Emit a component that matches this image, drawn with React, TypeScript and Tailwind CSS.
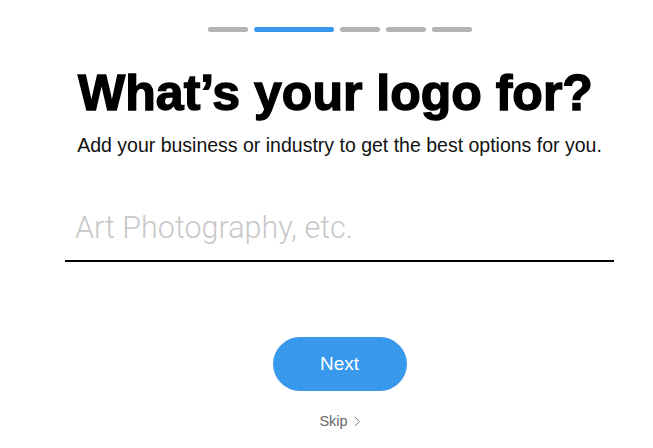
import { useState } from 'react';

const steps = [false, true, false, false, false];

export default function App() {
  const [value, setValue] = useState('');

  return (
    <div className="min-h-screen bg-white font-['Liberation_Sans',Arial,sans-serif]">
      <div className="ml-[65px] flex w-[549px] flex-col items-center pt-[27px]">
        <div className="flex gap-[6px]">
          {steps.map((active, i) => (
            <div
              key={i}
              className={
                active
                  ? 'h-[5px] w-[80px] rounded-full bg-[#3899ec]'
                  : 'h-[5px] w-[40px] rounded-full bg-[#b3b3b3]'
              }
            />
          ))}
        </div>

        <h1 className="mt-[31px] -translate-x-[4px] text-[50px] leading-[60px] font-bold text-black [-webkit-text-stroke:1.4px_black]">
          What’s your logo for?
        </h1>
        <p className="mt-[10px] text-[19.5px] leading-[24px] text-[#111]">
          Add your business or industry to get the best options for you.
        </p>

        <input
          value={value}
          onChange={(e) => setValue(e.target.value)}
          placeholder="Art Photography, etc."
          className="mt-[51px] w-full border-b-2 border-black bg-transparent px-[10px] pb-[12px] font-['Roboto',sans-serif] text-[30.5px] leading-[40px] font-light text-black outline-none placeholder:text-[#c8c8c8]"
        />

        <button className="mt-[75px] h-[54px] w-[134px] rounded-full bg-[#3899ec] text-[19px] text-white">
          Next
        </button>

        <button className="mt-[21px] flex items-center gap-[6px] text-[14.5px] leading-[18px] text-[#666]">
          Skip
          <svg width="6" height="11" viewBox="0 0 6 11" fill="none">
            <path d="M0.8 0.8l4.4 4.7-4.4 4.7" stroke="#777" strokeWidth="1" />
          </svg>
        </button>
      </div>
    </div>
  );
}
